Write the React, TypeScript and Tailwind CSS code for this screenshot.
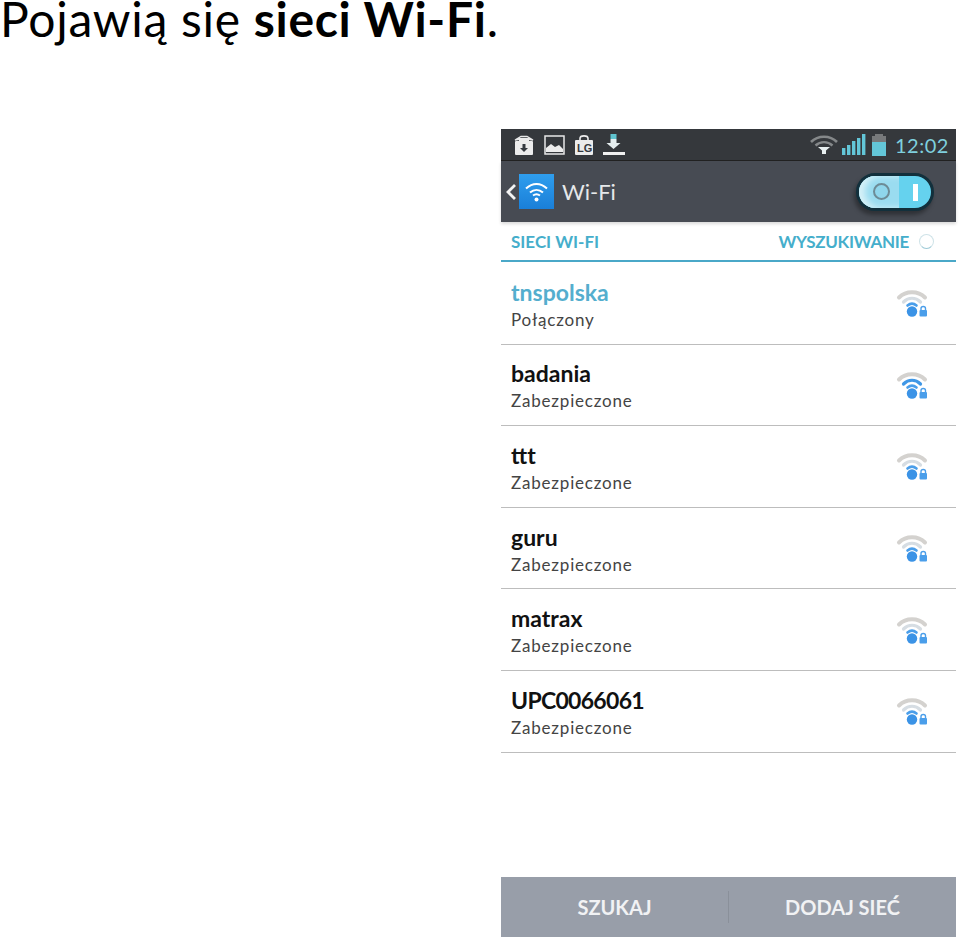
const networks = [
  { name: "tnspolska", status: "Połączony", active: true, level: 1 },
  { name: "badania", status: "Zabezpieczone", active: false, level: 2 },
  { name: "ttt", status: "Zabezpieczone", active: false, level: 1 },
  { name: "guru", status: "Zabezpieczone", active: false, level: 1 },
  { name: "matrax", status: "Zabezpieczone", active: false, level: 1 },
  { name: "UPC0066061", status: "Zabezpieczone", active: false, level: 1 },
];

const SignalIcon = ({ level }: { level: number }) => (
  <svg width="34" height="30" viewBox="0 0 34 30" fill="none">
    <path d="M3 9.5C10 2.5 22 2.5 29 9.5" stroke="#d4d2cf" strokeWidth="4" strokeLinecap="round" />
    <path d="M7.5 14C12.5 9 19.5 9 24.5 14" stroke={level > 1 ? "#3f97e6" : "#d6dde3"} strokeWidth="3.2" strokeLinecap="round" />
    <path d="M11.5 17.5C14.5 15 17.5 15 20.5 17.5" stroke="#4a9eea" strokeWidth="2.6" strokeLinecap="round" />
    <circle cx="16" cy="23.5" r="5.2" fill="#3b93e6" />
    <rect x="23.5" y="22" width="7.5" height="6.5" rx="1" fill="#4a9eea" />
    <path d="M25 22.5V20.5C25 17.8 29.5 17.8 29.5 20.5V22.5" stroke="#4a9eea" strokeWidth="1.4" />
  </svg>
);

const StatusIcons = () => (
  <div className="flex items-center gap-[9px]">
    <svg width="22" height="22" viewBox="0 0 22 22">
      <path d="M2 6L8 2.5H14L20 6L14 5H8Z" fill="none" stroke="#e8e8e8" strokeWidth="1.4" />
      <rect x="2" y="7" width="18" height="14" rx="1" fill="#ececec" />
      <rect x="6" y="4" width="10" height="3" fill="#ececec" />
      <path d="M9.5 10H12.5V14H15L11 18L7 14H9.5Z" fill="#35393f" />
    </svg>
    <svg width="21" height="20" viewBox="0 0 21 20">
      <rect x="1" y="1" width="19" height="18" fill="none" stroke="#e8e8e8" strokeWidth="1.5" />
      <path d="M2 17V13L7 9L11 12L15 10L19 14V17Z" fill="#ececec" />
    </svg>
    <svg width="20" height="22" viewBox="0 0 20 22">
      <path d="M6 7V4.5C6 1 14 1 14 4.5V7" fill="none" stroke="#ececec" strokeWidth="1.6" />
      <rect x="1" y="6" width="18" height="15" rx="1" fill="#ececec" />
      <text x="3" y="18" fontSize="11" fontWeight="700" fontFamily="Liberation Sans" fill="#35393f">LG</text>
    </svg>
    <svg width="23" height="23" viewBox="0 0 23 23" className="-ml-[1px]">
      <rect x="8.5" y="1" width="6" height="5" fill="#5fc3cf" />
      <path d="M8.5 6H14.5V10H18.5L11.5 16L4.5 10H8.5Z" fill="#e6eef0" />
      <rect x="1" y="19" width="22" height="3" fill="#f0f0f0" />
    </svg>
  </div>
);

const StatusRight = () => (
  <div className="flex items-center">
    <svg width="30" height="24" viewBox="0 0 30 24">
      <path d="M2 9C9 2 21 2 28 9" fill="none" stroke="#85888a" strokeWidth="2.6" />
      <path d="M6.5 12.5C11.5 8 18.5 8 23.5 12.5" fill="none" stroke="#85888a" strokeWidth="2.4" />
      <path d="M9 14H21L17 17.5V21H13V17.5Z" fill="#e8eff0" />
    </svg>
    <svg width="25" height="24" viewBox="0 0 25 24" className="ml-[2px]">
      <rect x="1" y="15" width="3.4" height="7" fill="#63c6d8" />
      <rect x="6" y="12" width="3.4" height="10" fill="#63c6d8" />
      <rect x="11" y="8" width="3.4" height="14" fill="#63c6d8" />
      <rect x="16" y="5" width="3.4" height="17" fill="#63c6d8" />
      <rect x="21" y="1" width="3.4" height="21" fill="#63c6d8" />
    </svg>
    <svg width="16" height="24" viewBox="0 0 16 24" className="ml-[5px]">
      <rect x="4" y="1" width="8" height="3" fill="#77797b" />
      <rect x="1" y="3" width="14" height="6" fill="#77797b" />
      <rect x="1" y="9" width="14" height="14" fill="#63c6d8" />
    </svg>
    <span className="ml-[8px] w-[53px] text-[20px] leading-none tracking-[0.5px] text-[#7fd0de]">12:02</span>
  </div>
);

const Toggle = () => (
  <div className="relative h-[38px] w-[78px] rounded-full border-[3px] border-[#12303c] bg-[#65d2ee] shadow-[-2px_4px_4px_rgba(0,0,0,0.35)]">
    <div className="flex h-full w-[40px] items-center justify-end rounded-l-full rounded-r-[6px] bg-[#9adcf0] pr-[9px] shadow-[inset_6px_0_6px_#d6f1f8]">
      <div className="h-[17px] w-[17px] rounded-full border-[2px] border-[#6d8b96] bg-[#8fd6ec]" />
    </div>
    <div className="absolute left-[54px] top-[8px] h-[17px] w-[5px] bg-white" />
  </div>
);

export default function App() {
  return (
    <div className="h-[942px] w-[960px] bg-white font-['Lato',sans-serif]">
      <div className="flow-root h-[129px]">
        <h1 className="-mt-[5px] text-[48px] leading-[48px] font-normal tracking-[0.7px] text-black">
          Pojawią się <b className="font-bold">sieci Wi-Fi</b>.
        </h1>
      </div>
      <div className="ml-[501px] flex h-[808px] w-[455px] flex-col">
        <div className="flex h-[32px] items-center justify-between border-b border-[#222] bg-[#35383c] pl-[12px] pr-[8px]">
          <StatusIcons />
          <StatusRight />
        </div>
        <div className="flex h-[61px] items-center bg-[#474b53] pr-[22px] shadow-[0_2px_3px_rgba(0,0,0,0.15)]">
          <svg width="12" height="20" viewBox="0 0 12 20" className="ml-[4px]">
            <path d="M10 3L3 10L10 17" fill="none" stroke="#f2f2f2" strokeWidth="2.8" />
          </svg>
          <div className="ml-[2px] flex h-[35px] w-[35px] items-center justify-center bg-gradient-to-b from-[#2f9eee] to-[#1a7fd8]">
            <svg width="25" height="21" viewBox="0 0 25 21" fill="none">
              <path d="M2 7.5C8.5 1.5 16.5 1.5 23 7.5" stroke="#fff" strokeWidth="2" />
              <path d="M6 11.5C10 8 15 8 19 11.5" stroke="#fff" strokeWidth="2" />
              <path d="M9 14.5C11 13 14 13 16 14.5" stroke="#fff" strokeWidth="2" />
              <circle cx="12.5" cy="18.5" r="2" fill="#fff" />
            </svg>
          </div>
          <span className="ml-[8px] text-[22px] leading-none text-[#e6e8ea]">Wi-Fi</span>
          <div className="ml-auto">
            <Toggle />
          </div>
        </div>
        <div className="flex h-[40px] items-center justify-between border-b-[2px] border-[#4aa8c8] pl-[10px] pr-[22px] pt-[1px] text-[17px] font-bold text-[#45aecb]">
          <span>SIECI WI-FI</span>
          <div className="flex items-center gap-[10px]">
            <span className="tracking-[-0.3px]">WYSZUKIWANIE</span>
            <div className="h-[15px] w-[15px] rounded-full border border-[#cfe3e8] border-b-[#9cc9d6]" />
          </div>
        </div>
        <div className="flex flex-col pt-[1px]">
          {networks.map((n) => (
            <div key={n.name} className="flex h-[81.6px] items-center justify-between border-b border-[#bdbdbd] pl-[10px] pr-[26px]">
              <div className="pt-[3px]">
                <div className={`text-[23px] leading-[28px] font-bold ${n.active ? "text-[#54aece]" : "text-[#111]"} ${n.name === "UPC0066061" ? "tracking-[-0.7px]" : ""}`}>
                  {n.name}
                </div>
                <div className="mt-[2px] text-[17px] leading-[24px] tracking-[0.8px] text-[#444]">{n.status}</div>
              </div>
              <SignalIcon level={n.level} />
            </div>
          ))}
        </div>
        <div className="mt-auto flex h-[60px] items-center bg-[#989ea9] text-[20px] font-bold text-[#f1f2f4]">
          <div className="flex flex-1 justify-center">SZUKAJ</div>
          <div className="h-[32px] w-px bg-[#8a909a]" />
          <div className="flex flex-1 justify-center">DODAJ SIEĆ</div>
        </div>
      </div>
    </div>
  );
}
